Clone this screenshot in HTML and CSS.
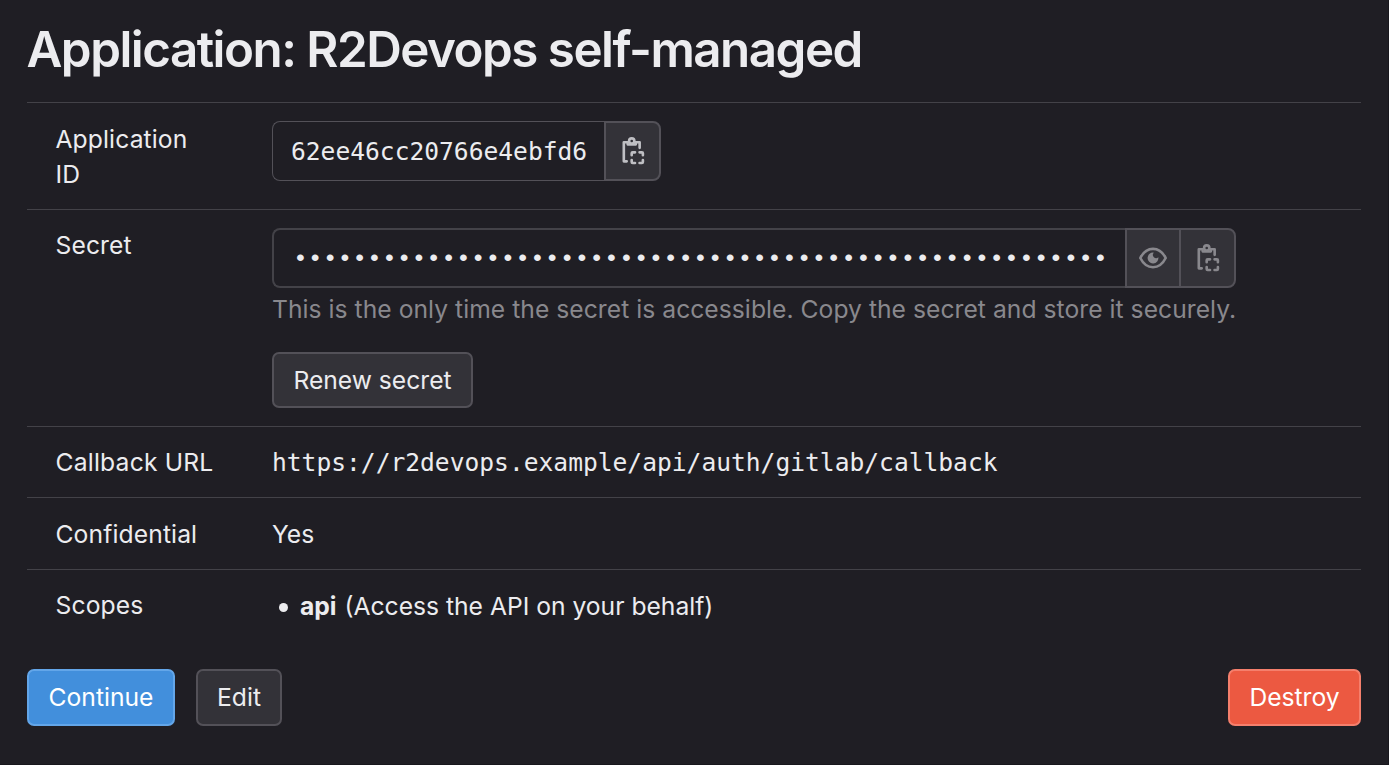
FILE: index.html
```html
<!DOCTYPE html>
<html lang="en">
<head>
<meta charset="utf-8">
<title>Application: R2Devops self-managed</title>
<link rel="stylesheet" href="styles.css">
</head>
<body>
<svg width="0" height="0" class="sprite" aria-hidden="true">
  <symbol id="paste" viewBox="0 0 16 16">
    <g fill="none" stroke="currentColor" stroke-width="1.5" stroke-linecap="round" stroke-linejoin="round">
      <path d="M4.4 13.9H2.75V3H5M9.6 3h2.2v3.2"/>
      <circle cx="7.27" cy="2.3" r="1.5"/>
      <path d="M4.9 3v1.3h4.8V3" stroke-width="1.3"/>
      <path d="M7.25 10.45V9.3q0-.55.55-.55h1.35M11.75 8.75h1.35q.55 0 .55.55v1.15M13.65 13.15v1.15q0 .55-.55.55h-1.35M9.15 14.85H7.8q-.55 0-.55-.55v-1.15"/>
    </g>
  </symbol>
  <symbol id="eye" viewBox="0 0 16 16">
    <path d="M.75 8C2.3 4.9 4.9 2.75 8 2.75S13.7 4.9 15.25 8C13.7 11.1 11.1 13.25 8 13.25S2.3 11.1.75 8z" fill="none" stroke="currentColor" stroke-width="1.5" stroke-linejoin="round"/>
    <path d="M8.5 4.95a3.1 3.1 0 1 0 2.55 2.55A1.75 1.75 0 0 1 8.5 4.95z" fill="currentColor"/>
  </symbol>
</svg>
<main class="page">
  <h1 class="title">Application: R2Devops self-managed</h1>
  <dl class="details">
    <div class="row row-id">
      <dt>Application ID</dt>
      <dd>
        <div class="group group-id">
          <div class="field mono">62ee46cc20766e4ebfd6</div>
          <button class="icon-btn" aria-label="Copy ID"><svg class="icon"><use href="#paste"/></svg></button>
        </div>
      </dd>
    </div>
    <div class="row row-secret">
      <dt>Secret</dt>
      <dd>
        <div class="group group-secret">
          <div class="field dots">•••••••••••••••••••••••••••••••••••••••••••••••••••••••</div>
          <button class="icon-btn reveal" aria-label="Reveal"><svg class="icon"><use href="#eye"/></svg></button>
          <button class="icon-btn last" aria-label="Copy secret"><svg class="icon"><use href="#paste"/></svg></button>
        </div>
        <p class="hint">This is the only time the secret is accessible. Copy the secret and store it securely.</p>
        <button class="btn renew">Renew secret</button>
      </dd>
    </div>
    <div class="row row-url"><dt>Callback URL</dt><dd class="mono">https://r2devops.example/api/auth/gitlab/callback</dd></div>
    <div class="row row-conf"><dt>Confidential</dt><dd>Yes</dd></div>
    <div class="row row-scopes"><dt>Scopes</dt><dd><ul class="scopes"><li><b>api</b> (Access the API on your behalf)</li></ul></dd></div>
  </dl>
  <div class="actions">
    <button class="btn confirm">Continue</button>
    <button class="btn edit">Edit</button>
    <button class="btn danger">Destroy</button>
  </div>
</main>
</body>
</html>
```
FILE: styles.css
```css
* { box-sizing: border-box; }
body {
  margin: 0;
  background: #1f1e24;
  color: #ececef;
  font: 400 24.65px/35px Inter, "Liberation Sans", sans-serif;
  letter-spacing: 0.04px;
}
.sprite { display: block; }
.page {
  height: 765px;
  padding: 0 27px;
  border-right: 1px solid #18171d;
  border-bottom: 1px solid #18171d;
}
.title {
  margin: 0 0 0 -0.5px;
  height: 102px;
  padding-top: 19px;
  font-size: 49.3px;
  line-height: 60px;
  font-weight: 600;
  letter-spacing: -1.5px;
  white-space: nowrap;
}
.details { margin: 0; }
.row {
  display: grid;
  grid-template-columns: 216px 1fr;
  padding: 18px 0 0 29px;
  border-top: 1px solid #434248;
}
.row-id { height: 107px; }
.row-id dt { padding-top: 1px; }
.row-secret { height: 217px; }
.row-url { height: 71px; }
.row-conf { height: 72px; padding-top: 19px; }
.row-scopes { height: 100px; }
dt { width: 160px; margin-left: -0.5px; letter-spacing: 0.12px; }
.row-url dt { letter-spacing: 0.2px; }
dd { margin: 0; }
.mono { font-family: "DejaVu Sans Mono", "Liberation Mono", monospace; font-size: 24.6px; letter-spacing: 0; }
.group { display: flex; height: 60px; }
.group-id { width: 389px; }
.group-secret { width: 964px; }
.field {
  flex: 1;
  min-width: 0;
  border: 1px solid #535158;
  border-right: 0;
  border-radius: 8px 0 0 8px;
  padding: 1px 0 0 18px;
  line-height: 58px;
  white-space: nowrap;
}
.dots {
  border: 2px solid #434248;
  border-right: 0;
  padding: 1px 0 0 19px;
  font-family: "Liberation Mono", monospace;
  font-size: 24.7px;
  letter-spacing: 0;
  line-height: 56px;
}
.icon-btn {
  display: flex;
  align-items: center;
  justify-content: center;
  width: 57px;
  padding: 0;
  border: 2px solid #535158;
  background: #333238;
  color: #bfbfc3;
}
.icon-btn:last-child { border-radius: 0 8px 8px 0; }
.group-secret .icon-btn { color: #89888d; }
.group-secret .reveal { width: 56px; }
.group-secret .last { margin-left: -2px; }
.icon { display: block; width: 28px; height: 28px; }
.hint { margin: 4px 0 25px; color: #89888d; white-space: nowrap; }
.btn {
  display: block;
  height: 57px;
  padding: 0;
  border: 2px solid #535158;
  border-radius: 7px;
  background: #333238;
  color: #ececef;
  font: inherit;
}
.renew { width: 201px; height: 56px; }
.scopes { list-style: none; margin: 0; padding: 1px 0 0; letter-spacing: 0; }
.scopes li { display: flex; align-items: center; gap: 8px; }
.scopes li::before { content: ""; width: 9px; height: 9px; margin: 1px 4px 0 7px; border-radius: 50%; background: currentColor; }
.actions { display: flex; gap: 21px; }
.confirm { width: 148px; background: #428fdc; border-color: #63a6e9; color: #fff; }
.edit { width: 86px; }
.danger { width: 133px; margin-left: auto; background: #ec5941; border-color: #f57f6c; color: #fff; }
```
